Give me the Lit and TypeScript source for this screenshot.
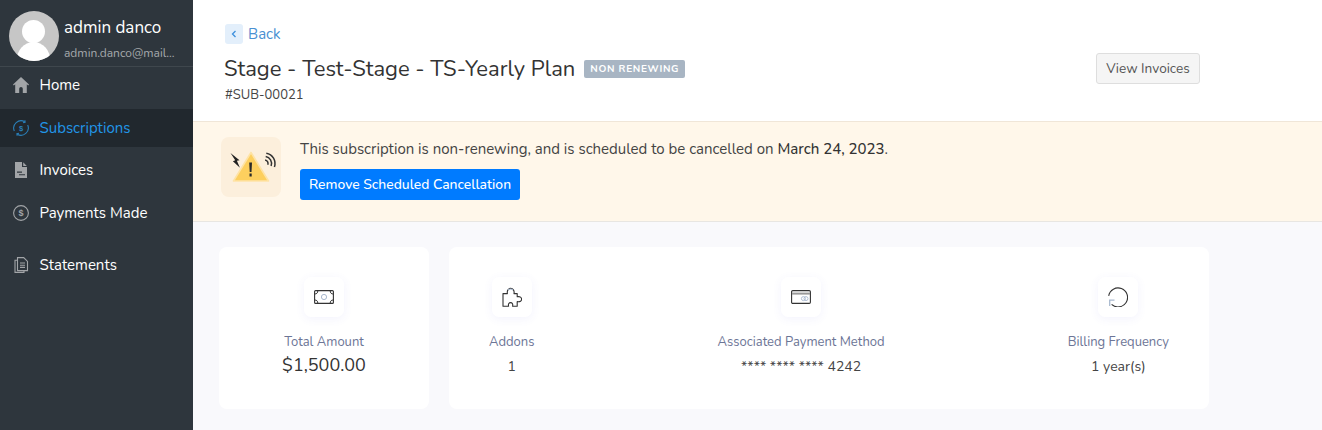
import { LitElement, html, css, svg } from "lit";
import { customElement } from "lit/decorators.js";

const navIcons: Record<string, unknown> = {
  home: svg`<path fill="currentColor" d="M8 0 0 7.600l.8.900L2.200 7.300V16h4v-4.200a1.800 1.800 0 0 1 3.600 0V16h4V7.300l1.400 1.200.8-.9L8 0z"/>`,
  subs: svg`<g fill="none" stroke="currentColor" stroke-width="1.100"><path d="M1.300 11A7.400 7.400 0 0 1 11.800 1.700"/><path d="M11.900 .2l.2 2-2 .4"/><path d="M14.700 5A7.400 7.400 0 0 1 4.200 14.300"/><path d="M4.100 15.800l-.2-2 2-.4"/></g><text x="8" y="10.800" font-size="7.500" font-weight="700" text-anchor="middle" fill="currentColor" font-family="Liberation Sans">$</text>`,
  inv: svg`<path fill="currentColor" fill-rule="evenodd" d="M2 0h7v5h5v11H2V0zm8.200.3 3.600 3.700h-3.600V.3zM4 9.600h5v1.100H4V9.600zm2 2.600h6v1.100H6v-1.100z"/>`,
  pay: svg`<circle cx="8" cy="8" r="7.400" fill="none" stroke="currentColor" stroke-width="1.100"/><text x="8" y="11.200" font-size="9" font-weight="700" text-anchor="middle" fill="currentColor" font-family="Liberation Sans">$</text>`,
  stmt: svg`<g fill="none" stroke="currentColor" stroke-width="1.100"><path d="M4.500 2.800V.6h6.200l3.800 3.800v9.200h-10V2.800z"/><path d="M4.300 3.200H2v12.200h9v-1.700"/><path d="M7 6h5M7 8.200h5M7 10.400h5"/></g>`,
};

@customElement("app-root")
export class AppRoot extends LitElement {
  static styles = css`
    :host { display: block; width: 1322px; height: 430px; overflow: hidden; font-family: "Nunito", "Noto Sans", sans-serif; color: #333; }
    .app { display: flex; height: 430px; }
    .side { width: 193px; flex: none; background: #2e363d; color: #fff; }
    .profile { height: 67px; box-sizing: border-box; display: flex; align-items: flex-start; gap: 5px; padding: 11px 0 0 9px; border-bottom: 1px solid #3f474d; }
    .avatar { width: 50px; height: 50px; flex: none; border-radius: 50%; background: #c6c6c6; overflow: hidden; }
    .avatar svg { display: block; }
    .pname { font-size: 17px; line-height: 22px; margin-top: 6px; color: #fff; white-space: nowrap; }
    .pmail { font-size: 12px; line-height: 16px; margin-top: 6px; color: #a5a9ac; width: 113px; white-space: nowrap; overflow: hidden; text-overflow: ellipsis; }
    nav { display: flex; flex-direction: column; margin-top: -1px; }
    .item { height: 38px; display: flex; align-items: center; gap: 10.500px; padding-left: 13px; font-size: 15px; margin-bottom: 4.500px; color: #fff; }
    .item svg { width: 16px; height: 16px; flex: none; color: #a2a5a8; }
    .item.active { background: #21282e; color: #2196e8; }
    .item.active svg { color: #2a7fb8; }
    .item.gap { margin-top: 10px; }
    main { flex: 1; min-width: 0; background: #f9f9fc; display: flex; flex-direction: column; }
    .head { height: 121px; box-sizing: border-box; background: #fff; padding: 24px 122px 0 31px; display: flex; justify-content: space-between; align-items: flex-start; }
    .back { display: flex; align-items: center; gap: 5px; color: #4a90d2; font-size: 15px; line-height: 20px; margin-left: 1px; }
    .chev { width: 18px; height: 20px; background: #e3effb; border-radius: 3px; display: flex; align-items: center; justify-content: center; }
    .title { display: flex; align-items: center; gap: 9px; margin-top: 10px; }
    h1 { margin: 0; font-size: 22px; font-weight: 400; line-height: 30px; color: #333; }
    .badge { background: #a8b5c3; color: #fff; font-size: 10px; font-weight: 700; letter-spacing: .68px; line-height: 18px; height: 18px; padding: 0 6px; border-radius: 2px; }
    .sub { font-size: 13px; line-height: 16px; margin-top: 3px; margin-left: 1px; color: #444; }
    .vbtn { margin-top: 29px; height: 31px; width: 104px; box-sizing: border-box; border: 1px solid #dedede; border-radius: 3px; background: #f5f5f5; color: #555; font: inherit; font-size: 13.600px; padding: 0; }
    .banner { height: 101px; box-sizing: border-box; background: #fff7ea; border-top: 1px solid #f0e6d8; border-bottom: 1px solid #e8e6e2; display: flex; gap: 19px; padding: 15px 0 0 28px; }
    .bicon { width: 60px; height: 60px; flex: none; background: #fcefdc; border-radius: 8px; }
    .bicon svg { display: block; }
    .msg { font-size: 15px; line-height: 20px; color: #444; margin-top: 2px; }
    .msg b { font-weight: 500; color: #333; }
    .rbtn { display: block; margin-top: 10px; height: 31px; width: 220px; border: 0; border-radius: 3px; background: #007bff; color: #fff; font: inherit; font-size: 13.900px; font-weight: 500; padding: 0; }
    .cards { display: flex; gap: 20px; padding: 25px 0 0 26px; }
    .card { background: #fff; border-radius: 8px; height: 162px; box-sizing: border-box; padding-top: 30px; display: flex; }
    .c1 { width: 210px; justify-content: center; }
    .c2 { width: 760px; justify-content: space-between; padding-left: 40px; padding-right: 40px; }
    .cell { display: flex; flex-direction: column; align-items: center; }
    .ic { width: 40px; height: 40px; border-radius: 7px; background: #fff; box-shadow: 0 2px 10px rgba(90, 90, 220, .07); display: flex; align-items: center; justify-content: center; }
    .lbl { margin-top: 16px; font-size: 13px; line-height: 18px; color: #6c7596; white-space: nowrap; }
    .val { margin-top: 7px; font-size: 14px; line-height: 18px; color: #444; white-space: nowrap; }
    .big { margin-top: 2px; font-size: 18px; line-height: 24px; color: #333; }
  `;

  private nav(icon: string, label: string, cls = "") {
    return html`<div class="item ${cls}"><svg viewBox="0 0 16 16">${navIcons[icon]}</svg><span>${label}</span></div>`;
  }

  render() {
    return html`<div class="app">
      <aside class="side">
        <div class="profile">
          <div class="avatar"><svg width="50" height="50" viewBox="0 0 50 50"><circle cx="24.500" cy="20.500" r="11.500" fill="#fff"/><ellipse cx="24.500" cy="50" rx="17" ry="19" fill="#fff"/></svg></div>
          <div><div class="pname">admin danco</div><div class="pmail">admin.danco@mailinator.com</div></div>
        </div>
        <nav>
          ${this.nav("home", "Home")}
          ${this.nav("subs", "Subscriptions", "active")}
          ${this.nav("inv", "Invoices")}
          ${this.nav("pay", "Payments Made")}
          ${this.nav("stmt", "Statements", "gap")}
        </nav>
      </aside>
      <main>
        <header class="head">
          <div>
            <div class="back"><span class="chev"><svg width="8" height="10" viewBox="0 0 8 10"><path d="M5.500 2 2.500 5l3 3" fill="none" stroke="#3d8fdc" stroke-width="1.300"/></svg></span>Back</div>
            <div class="title"><h1>Stage - Test-Stage - TS-Yearly Plan</h1><span class="badge">NON RENEWING</span></div>
            <div class="sub">#SUB-00021</div>
          </div>
          <button class="vbtn">View Invoices</button>
        </header>
        <section class="banner">
          <div class="bicon"><svg width="60" height="60" viewBox="0 0 60 60">
            <path d="M30 15.500 12.500 44h35z" fill="#fdcf5e" stroke="#fee3a6" stroke-width="1.600" stroke-linejoin="round"/>
            <path d="M28.200 25.500h2.800l-.5 9.500h-1.800zM28.500 36.600h2.200v3h-2.200z" fill="#2a2a2a"/>
            <path d="M9.500 16l9 7.200-2.600.6 3 7-7-6.500 2.300-1z" fill="#222"/>
            <g fill="none" stroke="#333" stroke-width="1.500"><path d="M44.100 23A3.500 3.500 0 0 1 46.800 27.700"/><path d="M44.700 19.600A7 7 0 0 1 50.100 28.900"/><path d="M45.300 16.200A10.500 10.500 0 0 1 53.400 30"/></g>
          </svg></div>
          <div>
            <div class="msg">This subscription is non-renewing, and is scheduled to be cancelled on <b>March 24, 2023</b>.</div>
            <button class="rbtn">Remove Scheduled Cancellation</button>
          </div>
        </section>
        <section class="cards">
          <div class="card c1"><div class="cell">
            <div class="ic"><svg width="20" height="14" viewBox="0 0 20 14" fill="none"><rect x=".6" y=".6" width="18.800" height="12.800" rx="1" stroke="#333" stroke-width="1.100"/><path d="M.8 4c2 0 3-1.200 3-3.200M19.200 4c-2 0-3-1.200-3-3.200M.8 10c2 0 3 1.200 3 3.200M19.200 10c-2 0-3 1.200-3 3.200" stroke="#333" stroke-width="1"/><circle cx="10" cy="7" r="2.600" stroke="#a9b9cf" stroke-width="1"/></svg></div>
            <div class="lbl">Total Amount</div><div class="big">$1,500.00</div>
          </div></div>
          <div class="card c2">
            <div class="cell"><div class="ic"><svg width="20" height="20" viewBox="0 0 20 20" fill="none" stroke="#333" stroke-width="1.100"><path d="M1 6.600h4.400c-.6-3 1-5.200 3.300-5.200 2.300 0 3.900 2.200 3.300 5.200h3.200v3.200c3-.6 4.400.7 4.400 2.400s-1.400 3-4.400 2.400v4.700H10.600c.5-2.400-.5-3.700-2-3.700s-2.600 1.300-2 3.700H1V6.600z" stroke-linejoin="round"/><path d="M6 3a3.500 3.500 0 0 1 5 0" stroke="#a9b9cf"/></svg></div><div class="lbl">Addons</div><div class="val">1</div></div>
            <div class="cell"><div class="ic"><svg width="20" height="14" viewBox="0 0 20 14" fill="none"><rect x=".6" y=".6" width="18.800" height="12.800" rx="1.200" stroke="#333" stroke-width="1.100"/><path d="M1 3.600h18" stroke="#999" stroke-width="2"/><circle cx="12.400" cy="8.600" r="2" stroke="#a9b9cf" stroke-width=".9"/><circle cx="15" cy="8.600" r="2" stroke="#a9b9cf" stroke-width=".9"/></svg></div><div class="lbl">Associated Payment Method</div><div class="val">**** **** **** 4242</div></div>
            <div class="cell"><div class="ic"><svg width="20" height="20" viewBox="0 0 20 20" fill="none"><path d="M.7 8.800A9.500 9.500 0 1 1 3.600 17.400" stroke="#333" stroke-width="1.100"/><path d="M6.500 13.200H1.700V19" stroke="#a9b9cf" stroke-width="1.300"/></svg></div><div class="lbl">Billing Frequency</div><div class="val">1 year(s)</div></div>
          </div>
        </section>
      </main>
    </div>`;
  }
}
